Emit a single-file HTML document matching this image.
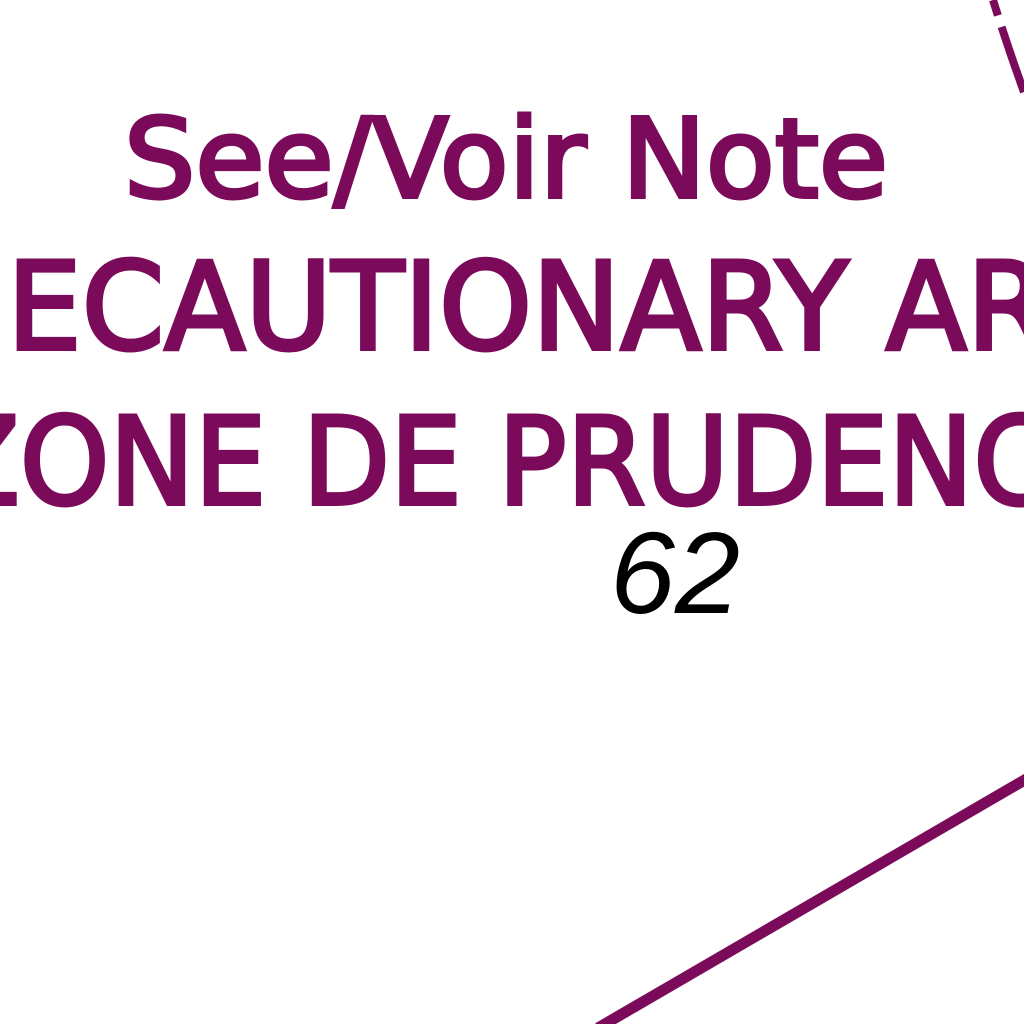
<!DOCTYPE html>
<html><head><style>
html,body{margin:0;padding:0;background:#fff;width:1024px;height:1024px;overflow:hidden}
svg{display:block}
</style></head><body>
<svg width="1024" height="1024" viewBox="0 0 1024 1024" xmlns="http://www.w3.org/2000/svg">
<g fill="#7b0a5a" font-family="DejaVu Sans, Liberation Sans, sans-serif" stroke="#7b0a5a" stroke-width="4">
<text x="124" y="197" font-size="110" textLength="764" lengthAdjust="spacingAndGlyphs">See/Voir Note</text>
<text x="7" y="349" font-size="121" textLength="1042" lengthAdjust="spacingAndGlyphs">ECAUTIONARY AR</text>
<text transform="translate(-58,504) scale(0.94,1)" x="0" y="0" font-size="121">ZONE DE PRUDENCE</text>
</g>
<text x="610" y="613" font-size="116" font-family="Liberation Sans, sans-serif" font-style="italic" fill="#000" textLength="130" lengthAdjust="spacingAndGlyphs">62</text>
<line x1="598" y1="1028" x2="1028" y2="778" stroke="#7b0a5a" stroke-width="11"/>
<path d="M993 0 Q1008 48 1024 92" fill="none" stroke="#7b0a5a" stroke-width="8" stroke-dasharray="16 12 80 200"/>
</svg>
</body></html>
